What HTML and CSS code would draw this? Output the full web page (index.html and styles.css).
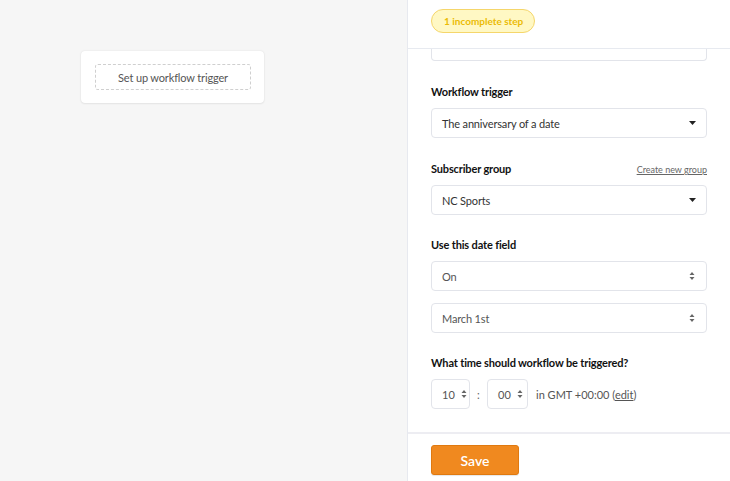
FILE: index.html
```html
<!DOCTYPE html>
<html>
<head>
<meta charset="utf-8">
<link rel="stylesheet" href="styles.css">
</head>
<body>
<div class="app">
  <div class="canvas">
    <div class="card">
      <div class="card-slot">Set up workflow trigger</div>
    </div>
  </div>
  <aside class="panel">
    <header class="panel-head">
      <span class="badge">1 incomplete step</span>
    </header>
    <div class="panel-body">
      <div class="clipped-input"></div>

      <div class="field">
        <div class="label-row"><label class="label">Workflow trigger</label></div>
        <div class="select">
          <span>The anniversary of a date</span>
          <svg class="caret" width="7" height="4" viewBox="0 0 7 4"><path d="M0 0h7L3.5 4z" fill="#222"/></svg>
        </div>
      </div>

      <div class="field">
        <div class="label-row">
          <label class="label">Subscriber group</label>
          <a class="link-small">Create new group</a>
        </div>
        <div class="select">
          <span>NC Sports</span>
          <svg class="caret" width="7" height="4" viewBox="0 0 7 4"><path d="M0 0h7L3.5 4z" fill="#222"/></svg>
        </div>
      </div>

      <div class="field tight">
        <div class="label-row"><label class="label">Use this date field</label></div>
        <div class="select light">
          <span>On</span>
          <svg class="spin" width="6" height="10" viewBox="0 0 6 10"><path d="M0.5 4h5L3 1z M0.5 6h5L3 9z" fill="#666"/></svg>
        </div>
        <div class="select light second">
          <span>March 1st</span>
          <svg class="spin" width="6" height="10" viewBox="0 0 6 10"><path d="M0.5 4h5L3 1z M0.5 6h5L3 9z" fill="#666"/></svg>
        </div>
      </div>

      <div class="field tight">
        <div class="label-row"><label class="label">What time should workflow be triggered?</label></div>
        <div class="time-row">
          <div class="time-box hour">
            <span>10</span>
            <svg width="6" height="10" viewBox="0 0 6 10"><path d="M0.5 4h5L3 1z M0.5 6h5L3 9z" fill="#666"/></svg>
          </div>
          <span class="colon">:</span>
          <div class="time-box minute">
            <span>00</span>
            <svg width="6" height="10" viewBox="0 0 6 10"><path d="M0.5 4h5L3 1z M0.5 6h5L3 9z" fill="#666"/></svg>
          </div>
          <span class="tz">in GMT +00:00 (<a class="edit">edit</a>)</span>
        </div>
      </div>
    </div>
    <footer class="panel-foot">
      <button class="save">Save</button>
    </footer>
  </aside>
</div>
</body>
</html>
```

FILE: styles.css
```css
* { box-sizing: border-box; }
html, body { margin: 0; padding: 0; }
body {
  font-family: Lato, "Open Sans", sans-serif;
  color: #333;
  width: 730px;
  height: 481px;
  overflow: hidden;
}
.app {
  display: flex;
  height: 481px;
}
.canvas {
  width: 408px;
  background: #f6f6f6;
  border-right: 1px solid #e7e9ef;
  padding: 51px 0 0 81px;
}
.card {
  width: 183px;
  height: 52px;
  background: #fff;
  border-radius: 4px;
  box-shadow: 0 0 2px rgba(0,0,0,0.1), 0 1px 2px rgba(0,0,0,0.05);
  padding: 13px 13px 12px 14px;
}
.card-slot {
  height: 26px;
  border: 1px dashed #cfcfcf;
  border-radius: 3px;
  display: flex;
  align-items: center;
  justify-content: center;
  font-size: 11px;
  letter-spacing: -0.15px;
  color: #555;
}
.panel {
  flex: 1;
  display: flex;
  flex-direction: column;
  background: #fff;
}
.panel-head {
  height: 49px;
  border-bottom: 1px solid #e7eaf0;
  padding: 9px 0 0 23px;
}
.badge {
  display: inline-flex;
  align-items: center;
  height: 24px;
  padding: 0 11px 0 12px;
  border-radius: 12px;
  background: #fff8c4;
  border: 1px solid #f5d66b;
  color: #ebbb05;
  font-weight: 700;
  font-size: 10px;
}
.panel-body {
  flex: 1;
  padding: 0 23px 0 23px;
  overflow: hidden;
}
.clipped-input {
  height: 12px;
  border: 1px solid #e2e4ea;
  border-top: none;
  border-radius: 0 0 4px 4px;
}
.field {
  margin-top: 24px;
}
.field.tight {
  margin-top: 23px;
}
.label-row {
  display: flex;
  justify-content: space-between;
  align-items: baseline;
  height: 13px;
  line-height: 13px;
  margin-bottom: 10px;
}
.label {
  font-weight: 700;
  font-size: 11px;
  letter-spacing: -0.15px;
  color: #111;
}
.link-small {
  font-size: 9px;
  color: #666;
  text-decoration: underline;
}
.select {
  height: 30px;
  border: 1px solid #e2e4ea;
  border-radius: 4px;
  display: flex;
  align-items: center;
  justify-content: space-between;
  padding: 0 10px 0 10px;
  font-size: 11px;
  letter-spacing: -0.15px;
  color: #333;
}
.select.light { color: #555; }
.select.second { margin-top: 12px; }
.spin { margin-right: 1px; }
.time-row {
  display: flex;
  align-items: center;
}
.time-box {
  height: 30px;
  border: 1px solid #e2e4ea;
  border-radius: 4px;
  display: flex;
  align-items: center;
  gap: 6px;
  font-size: 11px;
  color: #555;
}
.time-box.hour { width: 39px; padding-left: 10px; }
.time-box.minute { width: 41px; padding-left: 10px; }
.colon {
  width: 17px;
  text-align: center;
  font-size: 11px;
  color: #666;
}
.tz {
  margin-left: 8px;
  font-size: 11px;
  color: #555;
}
.edit { text-decoration: underline; }
.panel-foot {
  height: 49px;
  border-top: 2px solid #ededf2;
  padding: 11px 0 0 23px;
}
.save {
  width: 88px;
  height: 30px;
  background: #f0891f;
  border: 1px solid #e0790f;
  border-radius: 3px;
  color: #fff;
  font-family: Lato, sans-serif;
  font-size: 14px;
  font-weight: 600;
  box-shadow: 0 1px 1px rgba(0,0,0,0.1);
}
```
